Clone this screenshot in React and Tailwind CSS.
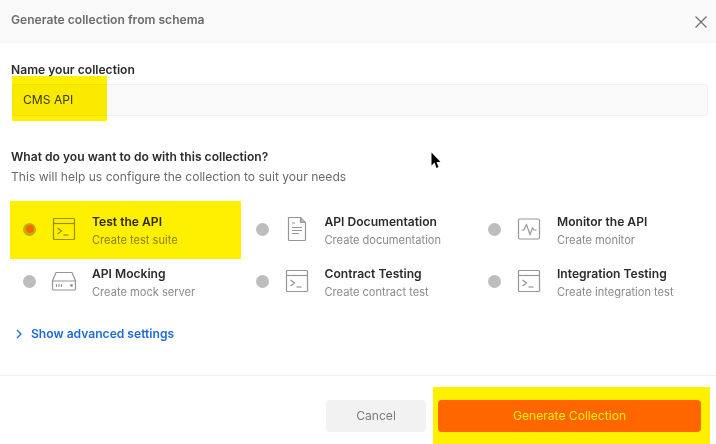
const Terminal = () => (
  <svg width="24" height="24" viewBox="0 0 24 24" fill="none" stroke="#969696" strokeWidth="1.2">
    <rect x="1.500" y="1.500" width="21" height="21" rx="1" />
    <path d="M1.500 6.500h21" />
    <path d="M5.500 11l4 3-4 3" />
    <path d="M11.500 18h5" />
  </svg>
);
const Doc = () => (
  <svg width="24" height="24" viewBox="0 0 24 24" fill="none" stroke="#969696" strokeWidth="1.2">
    <path d="M3.500 0.500h12l5 5v17a1 1 0 0 1-1 1h-15a1 1 0 0 1-1-1z" />
    <path d="M15.500 0.500v5h5" fill="#b5b5b5" />
    <path d="M7 6h3M7 10.500h10M7 13.500h10M7 16.500h7" />
  </svg>
);
const Monitor = () => (
  <svg width="24" height="24" viewBox="0 0 24 24" fill="none" stroke="#969696" strokeWidth="1.2">
    <rect x="1.500" y="2" width="21" height="20" rx="1.500" />
    <path d="M4.500 13h2.500l2.500-5.500 3.500 10 2.500-6.500 1.500 2h2.500" />
  </svg>
);
const Server = () => (
  <svg width="26" height="24" viewBox="0 0 26 24" fill="none" stroke="#969696" strokeWidth="1.2">
    <path d="M1.500 12l3.500-8.500h16L24.500 12" />
    <path d="M1.500 12h23v8a1 1 0 0 1-1 1h-21a1 1 0 0 1-1-1z" />
    <path d="M5.500 15v3M8 15v3M10.500 15v3" />
    <circle cx="20.500" cy="16.500" r="0.8" fill="#969696" />
  </svg>
);

const options = [
  { t: "Test the API", s: "Create test suite", I: Terminal, on: true },
  { t: "API Documentation", s: "Create documentation", I: Doc },
  { t: "Monitor the API", s: "Create monitor", I: Monitor },
  { t: "API Mocking", s: "Create mock server", I: Server },
  { t: "Contract Testing", s: "Create contract test", I: Terminal },
  { t: "Integration Testing", s: "Create integration test", I: Terminal },
];

const Option = ({ t, s, I, on }) => (
  <div className="flex items-center h-[52px]">
    <span className="flex items-center justify-center w-[13px] h-[13px] rounded-full bg-[#bdbdbd]">
      {on && <span className="block w-[8px] h-[8px] rounded-full bg-[#ff6c00]" />}
    </span>
    <span className="flex justify-center w-[26px] ml-[15px] shrink-0"><I /></span>
    <div className="ml-[15px] pt-[2px]">
      <div className="text-[12.100px] leading-[18px] font-semibold text-[#2b2b2b] whitespace-nowrap">{t}</div>
      <div className="mt-[1px] text-[11.100px] leading-[16px] text-[#8a8a8a] whitespace-nowrap">{s}</div>
    </div>
  </div>
);

export default function App() {
  return (
    <div className="relative w-[716px] h-[444px] overflow-hidden bg-white font-['Inter',sans-serif]">
      <header className="flex items-center justify-between h-[43px] pl-[11px] pr-[8px] bg-[#f9f9f9]">
        <h1 className="pb-[2px] text-[12.100px] font-semibold text-[#6b6b6b]">Generate collection from schema</h1>
        <svg width="14" height="14" viewBox="0 0 14 14" fill="none" stroke="#6b6b6b" strokeWidth="1.1">
          <path d="M1.500 1.500l11 11M12.500 1.500l-11 11" />
        </svg>
      </header>

      <main className="pl-[11px] pr-[8px]">
        <label className="block mt-[19px] text-[12.100px] leading-[16px] font-semibold text-[#2b2b2b]">Name your collection</label>
        <div className="flex items-center mt-[6px] ml-px h-[32px] pl-[10px] pt-[1px] rounded-[3px] border border-[#f0f0f0] bg-[#f9f9f9] text-[12.100px] text-[#3a3a3a]">CMS API</div>

        <h2 className="mt-[33px] text-[12.100px] leading-[16px] font-semibold text-[#2b2b2b]">What do you want to do with this collection?</h2>
        <p className="mt-[3px] text-[12.100px] leading-[18px] text-[#6b6b6b]">This will help us configure the collection to suit your needs</p>

        <div className="grid grid-cols-[232.500px_232.500px_1fr] mt-[17px] pl-[12px]">
          {options.map((o) => <Option key={o.t} {...o} />)}
        </div>

        <button className="flex items-center mt-[18px] ml-[4px] text-[12.100px] leading-[18px] font-semibold text-[#1d6ad8]">
          <svg width="8" height="10" viewBox="0 0 8 10" fill="none" stroke="#1d6ad8" strokeWidth="1.300">
            <path d="M2 1l4 4-4 4" />
          </svg>
          <span className="ml-[8px]">Show advanced settings</span>
        </button>
      </main>

      <footer className="absolute left-0 right-0 top-[375px] flex justify-end gap-[12px] h-[69px] pt-[24px] pr-[15px] border-t border-[#f0f0f0]">
        <button className="w-[100px] h-[32px] rounded-[4px] bg-[#f2f2f2] text-[12.100px] text-[#7a7a7a]">Cancel</button>
        <button className="w-[263px] h-[32px] rounded-[4px] bg-[#ff6c00] text-[12.100px] text-white">Generate Collection</button>
      </footer>

      <div className="absolute left-[12px] top-[76px] w-[95px] h-[45px] bg-[#fff000] mix-blend-multiply" />
      <div className="absolute left-[10px] top-[201px] w-[231px] h-[58px] bg-[#fff000] mix-blend-multiply" />
      <div className="absolute left-[433px] top-[387px] w-[277px] h-[57px] bg-[#fff000] mix-blend-multiply" />

      <svg className="absolute left-[431px] top-[152px]" width="11" height="18" viewBox="0 0 11 18">
        <path d="M0.500 0.500v13l3-3 2 5.500 2-1-2-5h4z" fill="#000" />
      </svg>
    </div>
  );
}
